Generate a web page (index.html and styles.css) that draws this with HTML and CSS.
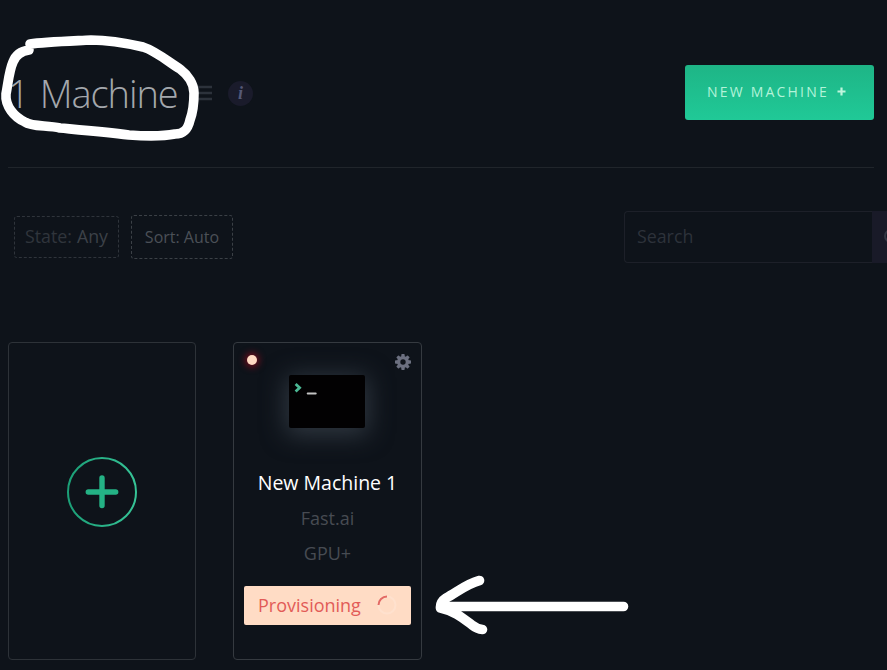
FILE: index.html
```html
<!DOCTYPE html>
<html lang="en">
<head>
<meta charset="utf-8">
<title>Machines</title>
<link rel="stylesheet" href="styles.css">
</head>
<body>
<main class="page">
  <header class="header">
    <h1 class="title">1 Machine</h1>
    <svg class="menu" width="16" height="16" viewBox="0 0 16 16"><path d="M0 2h16M0 8h16M0 14h16" stroke="#2c323b" stroke-width="2.4"/></svg>
    <span class="info">i</span>
    <button class="new-machine">NEW MACHINE
      <svg width="9" height="9" viewBox="0 0 9 9"><path d="M4.5 0.5v8M0.5 4.5h8" stroke="#bff5dd" stroke-width="2.2"/></svg>
    </button>
  </header>
  <section class="filters">
    <div class="filter state"><span>State:</span> Any</div>
    <div class="filter sort">Sort: Auto</div>
    <div class="search">
      <div class="search-input">Search</div>
      <div class="search-button"><svg width="20" height="20" viewBox="0 0 20 20"><circle cx="9" cy="9" r="6" fill="none" stroke="#333744" stroke-width="2"/></svg></div>
    </div>
  </section>
  <section class="cards">
    <div class="card add">
      <svg width="70" height="70" viewBox="0 0 70 70" fill="none">
        <defs><linearGradient id="ring"><stop stop-color="#1b9f77"/><stop offset="1" stop-color="#36c497"/></linearGradient></defs>
        <circle cx="35" cy="35" r="34" stroke="url(#ring)" stroke-width="2"/>
        <path d="M35 21v27.5M21.3 35h27.4" stroke="#24b285" stroke-width="5.4" stroke-linecap="round"/>
      </svg>
    </div>
    <div class="card machine">
      <div class="card-top">
        <span class="dot"></span>
        <svg class="gear" width="16" height="16" viewBox="-8 -8 16 16">
          <g fill="#6c7080"><rect id="t" x="-1.7" y="-8" width="3.4" height="16" rx=".8"/><use href="#t" transform="rotate(45)"/><use href="#t" transform="rotate(90)"/><use href="#t" transform="rotate(135)"/><circle r="6"/></g>
          <circle r="2.7" fill="#10141b"/>
        </svg>
      </div>
      <div class="terminal">
        <svg width="30" height="24" viewBox="0 0 30 24" fill="none"><path d="M6.6 9l4 3.8-4 3.8" stroke="#4bb894" stroke-width="2.8"/><path d="M18.7 18.5h8" stroke="#c4c4c4" stroke-width="2" stroke-linecap="round"/></svg>
      </div>
      <h2 class="name">New Machine 1</h2>
      <p class="meta">Fast.ai</p>
      <p class="meta">GPU+</p>
      <div class="status"><span>Provisioning</span>
        <svg width="20" height="20" viewBox="0 0 20 20" fill="none" stroke-width="2"><circle cx="10" cy="10" r="8.5" stroke="#ffe1ce"/><path d="M1.5 10A8.5 8.5 0 0 1 10 1.5" stroke="#e36a65"/></svg>
      </div>
    </div>
  </section>
</main>
<svg class="marks" width="887" height="670" viewBox="0 0 887 670" fill="none" stroke="#fff" stroke-width="9.6" stroke-linecap="round" stroke-linejoin="round">
  <path d="M30 44C44 42 72 41 91 40C112 40 130 44 143 47C156 51 170 63 180 69C188 75 194 84 194 93C194 104 193 112 190 120C188 129 184 134 175 134C160 137 143 136 129 135C106 132 82 130 60 128C47 125 32 127 25 122C14 117 5 106 6 94C8 84 9 71 13 62C16 54 22 51 29 50"/>
  <path d="M440.500 606.500H623.500M479.500 580.500C466 584 456 593 446 598Q440 602 440.500 608C455 611 464 619 472 625Q477 629 482.500 629.500"/>
</svg>
</body>
</html>
```
FILE: styles.css
```css
* { box-sizing: border-box; }
body {
  margin: 0;
  height: 670px;
  overflow: hidden;
  background: #0e131a;
  font-family: "Open Sans", "Noto Sans", sans-serif;
}
.page { padding: 0 13px 0 8px; }
.header {
  display: flex;
  align-items: center;
  height: 168px;
  padding-top: 18px;
  border-bottom: 1px solid #20252b;
}
.title {
  margin: 1px 0 0;
  width: 170px;
  font-size: 38px;
  line-height: 53px;
  font-weight: 300;
  letter-spacing: -1.1px;
  word-spacing: 2.5px;
  white-space: nowrap;
  color: #a3a7ac;
}
.menu { margin-left: 18px; }
.info {
  width: 25px;
  height: 25px;
  margin: 1px 0 0 16px;
  border-radius: 50%;
  background: #1a1b2b;
  color: #555977;
  font: italic bold 18px/24px "Liberation Serif", serif;
  text-align: center;
}
.new-machine {
  display: flex;
  align-items: center;
  gap: 8px;
  width: 189px;
  height: 55px;
  margin-left: auto;
  padding: 0 0 2px 22px;
  border: 0;
  border-radius: 3px;
  background: linear-gradient(#1eb586, #20c997);
  color: #b3f3d9;
  font: 14px "Open Sans", sans-serif;
  letter-spacing: 2.2px;
  white-space: nowrap;
}
.filters {
  display: flex;
  align-items: flex-start;
  height: 174px;
  padding: 43px 0 0 6px;
  margin-right: -33px;
}
.filter {
  display: flex;
  align-items: center;
  justify-content: center;
  gap: 5px;
  border: 1px dashed #3b4046;
  border-radius: 3px;
  color: #4b5057;
}
.state {
  width: 105px;
  height: 42px;
  margin-top: 5px;
  padding-bottom: 2px;
  border-color: #2f343b;
  color: #3c4148;
  font-size: 17.800px;
}
.state span { color: #30353c; }
.sort { width: 102px; height: 44px; margin: 4px 0 0 12px; font-size: 16px; }
.search { display: flex; width: 283px; height: 52px; margin-left: auto; }
.search-input {
  width: 248px;
  padding-left: 12px;
  border: 1px solid #1d2029;
  border-right: 0;
  border-radius: 4px 0 0 4px;
  color: #2d323a;
  font-size: 17.800px;
  line-height: 49px;
}
.search-button { flex: 1; padding: 16px 0 0 10px; background: #191a28; }
.cards { display: flex; gap: 37px; }
.card { height: 318px; border: 1px solid #353a40; border-radius: 4px; }
.add {
  display: flex;
  align-items: center;
  justify-content: center;
  width: 188px;
  border-color: #2d3238;
}
.add svg { margin-top: -19px; }
.machine {
  display: flex;
  flex-direction: column;
  align-items: center;
  width: 189px;
  overflow: hidden;
}
.card-top {
  display: flex;
  justify-content: space-between;
  align-self: stretch;
  height: 32px;
  padding: 12px 10px 0 13px;
}
.dot {
  width: 10px;
  height: 10px;
  border-radius: 50%;
  background: #ffdac3;
  box-shadow: 0 0 7px 2px #780d1d;
}
.gear { flex: none; margin-top: -1px; }
.terminal {
  width: 76px;
  height: 53px;
  margin-right: 1px;
  border-radius: 2px;
  background: #020102;
  box-shadow: 0 4px 24px 3px #303841;
}
.terminal svg { display: block; }
.name {
  margin: 42px 0 5px;
  font-size: 19.500px;
  line-height: 26px;
  font-weight: 400;
  white-space: nowrap;
  color: #fff;
}
.meta { margin: 0; color: #474b52; font-size: 18px; line-height: 35px; }
.status {
  display: flex;
  align-items: center;
  justify-content: space-between;
  width: 167px;
  height: 39px;
  margin-top: 15px;
  padding: 0 14px 1px;
  border-radius: 2px;
  background: #ffdcc5;
  color: #e25b57;
  font-size: 18px;
}
.marks { position: absolute; top: 0; left: 0; pointer-events: none; }
```
